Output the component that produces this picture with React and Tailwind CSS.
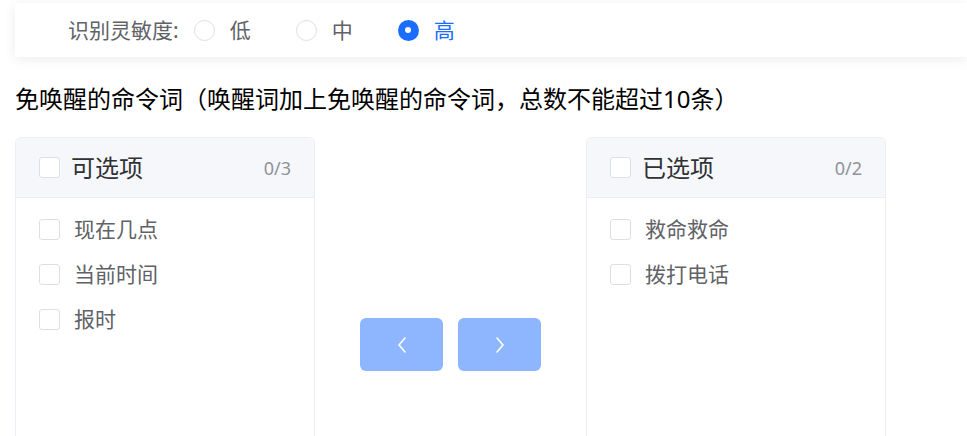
import React, { useState } from "react";

const font = { fontFamily: '"Noto Sans", "Noto Sans CJK SC", sans-serif' };

function Checkbox() {
  return (
    <span className="inline-block w-[21px] h-[21px] shrink-0 rounded-[3px] border border-[#dcdfe6] bg-white" />
  );
}

function Radio({ label, checked, onClick }) {
  return (
    <label className="flex items-center cursor-pointer mr-[45px]" onClick={onClick}>
      <span
        className={
          checked
            ? "flex items-center justify-center w-[21px] h-[21px] rounded-full bg-[#1b6dff]"
            : "w-[21px] h-[21px] rounded-full border border-[#dcdfe6] bg-white"
        }
      >
        {checked && <span className="w-[6px] h-[6px] rounded-full bg-white" />}
      </span>
      <span
        className={
          "pl-[15px] text-[21px] leading-none " +
          (checked ? "text-[#1b6dff]" : "text-[#606266]")
        }
      >
        {label}
      </span>
    </label>
  );
}

function Panel({ title, items }) {
  return (
    <div className="w-[300px] h-[369px] shrink-0 border border-[#ebeef5] rounded-[6px] overflow-hidden bg-white">
      <div className="h-[60px] bg-[#f5f7fa] border-b border-[#ebeef5] flex items-center pl-[23px] pr-[23px]">
        <Checkbox />
        <span className="pl-[11px] text-[24px] text-[#303133] leading-none">{title}</span>
        <span className="ml-auto text-[18px] text-[#909399] leading-none">
          0/{items.length}
        </span>
      </div>
      <div className="pt-[9px]">
        {items.map((it) => (
          <div key={it} className="h-[45px] flex items-center pl-[23px]">
            <Checkbox />
            <span className="pl-[14px] text-[21px] text-[#606266] leading-none">{it}</span>
          </div>
        ))}
      </div>
    </div>
  );
}

function ArrowBtn({ dir }) {
  return (
    <button className="w-[83px] h-[53px] rounded-[6px] bg-[#8db6ff] flex items-center justify-center cursor-not-allowed">
      <svg width="10" height="16" viewBox="0 0 10 16" fill="none">
        <path
          d={dir === "left" ? "M8 1 L2 8 L8 15" : "M2 1 L8 8 L2 15"}
          stroke="white"
          strokeWidth="1.6"
          strokeLinecap="round"
          strokeLinejoin="round"
        />
      </svg>
    </button>
  );
}

export default function App() {
  const [level, setLevel] = useState("高");

  return (
    <div className="w-[967px] h-[436px] overflow-hidden bg-white" style={font}>
      <div className="pt-[3px] pl-[15px]">
        <div className="h-[54px] bg-white shadow-[0_2px_12px_rgba(0,0,0,0.08)] flex items-center pl-[53px]">
          <span className="text-[21px] text-[#606266] leading-none mr-[15px]">识别灵敏度:</span>
          {["低", "中", "高"].map((l) => (
            <Radio key={l} label={l} checked={level === l} onClick={() => setLevel(l)} />
          ))}
        </div>
      </div>

      <div className="px-[15px] pt-[26px] text-[24px] leading-[32px] text-black">
        免唤醒的命令词（唤醒词加上免唤醒的命令词，总数不能超过10条）
      </div>

      <div className="flex items-start px-[15px] pt-[22px]">
        <Panel title="可选项" items={["现在几点", "当前时间", "报时"]} />
        <div className="flex gap-[15px] mx-[45px] mt-[181px]">
          <ArrowBtn dir="left" />
          <ArrowBtn dir="right" />
        </div>
        <Panel title="已选项" items={["救命救命", "拨打电话"]} />
      </div>
    </div>
  );
}
